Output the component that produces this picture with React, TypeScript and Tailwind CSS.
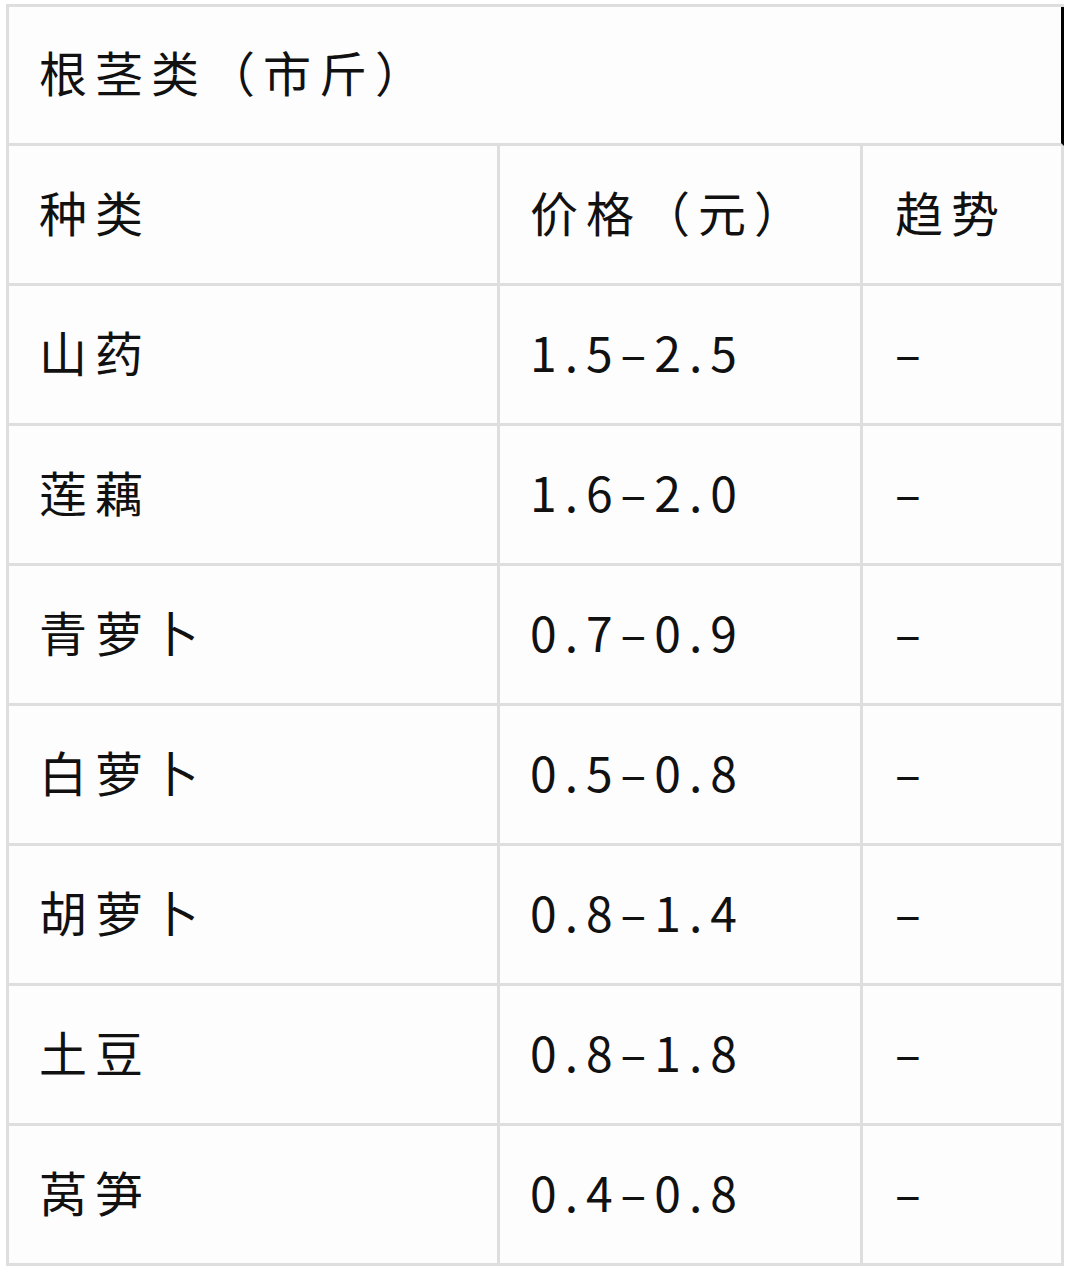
import React from "react";

const rows: [string, string][] = [
  ["山药", "1.5–2.5"],
  ["莲藕", "1.6–2.0"],
  ["青萝卜", "0.7–0.9"],
  ["白萝卜", "0.5–0.8"],
  ["胡萝卜", "0.8–1.4"],
  ["土豆", "0.8–1.8"],
  ["莴笋", "0.4–0.8"],
];

function Row({ a, b, c }: { a: string; b: string; c: string }) {
  return (
    <div className="flex h-[140px]">
      <div className="w-[491px] border-r-[3px] border-b-[3px] border-[#dedede] flex items-center pl-[30px] pb-[8px]">
        {a}
      </div>
      <div className="w-[363px] border-r-[3px] border-b-[3px] border-[#dedede] flex items-center pl-[30px] pb-[8px]">
        {b}
      </div>
      <div className="w-[201px] border-r-[3px] border-b-[3px] border-[#dedede] flex items-center pl-[32px] pb-[8px]">
        {c}
      </div>
    </div>
  );
}

export default function App() {
  return (
    <div
      className="w-[1071px] h-[1267px] bg-white pt-[4px] pl-[6px] text-[#111] text-[48px] tracking-[8px] leading-none"
      style={{ fontFamily: '"Noto Sans CJK SC", "Noto Sans", sans-serif' }}
    >
      <div className="w-[1058px] border-l-[3px] border-t-[3px] border-[#dedede] bg-[#fdfdfd]">
        <div className="h-[139px] flex items-center pl-[30px] pb-[8px] border-b-[3px] border-b-[#dedede] border-r-[3px] border-r-black">
          根茎类（市斤）
        </div>
        <Row a="种类" b="价格（元）" c="趋势" />
        {rows.map(([a, b]) => (
          <Row key={a} a={a} b={b} c="–" />
        ))}
      </div>
    </div>
  );
}
